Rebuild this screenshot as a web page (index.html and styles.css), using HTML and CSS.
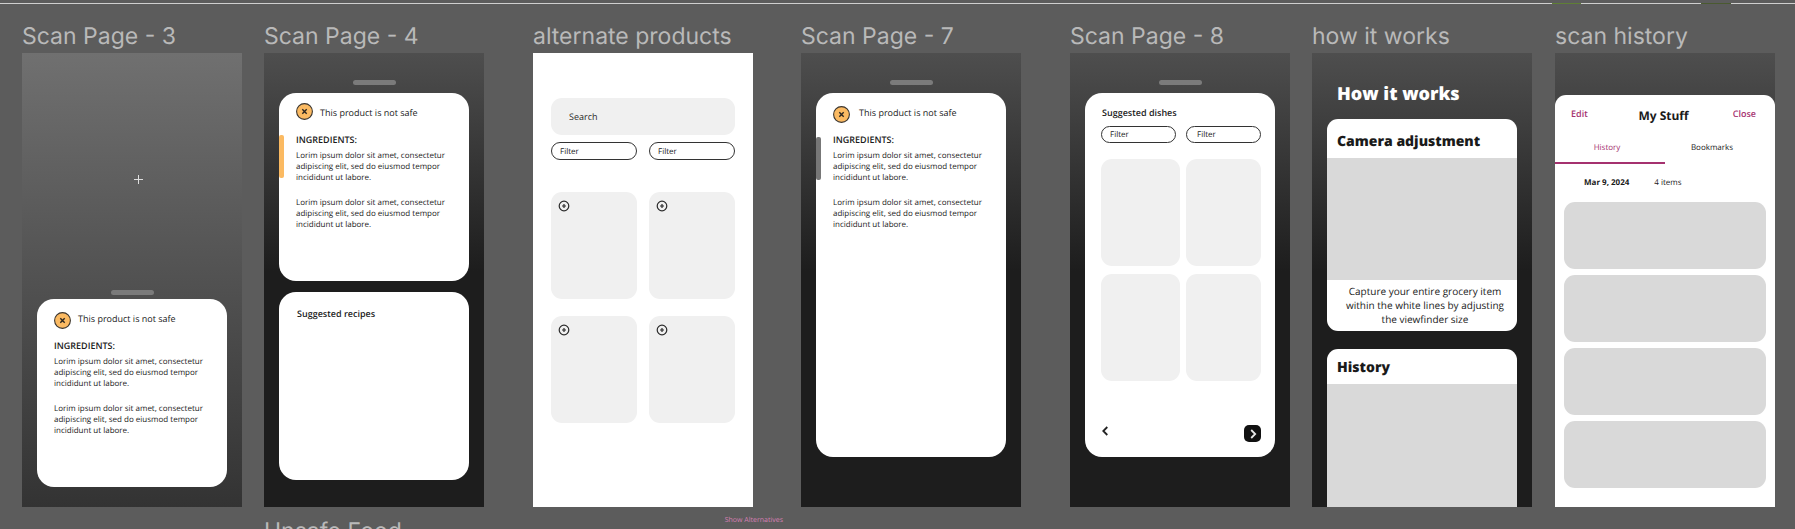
FILE: index.html
```html
<!DOCTYPE html>
<html lang="en">
<head>
<meta charset="utf-8">
<title>Scan app screens</title>
<link rel="stylesheet" href="styles.css">
</head>
<body>
<svg class="symbols" aria-hidden="true">
  <symbol id="unsafe" viewBox="0 0 17 17">
    <circle cx="8.5" cy="8.5" r="7.9" fill="#fbba62" stroke="#3b3630" stroke-width="1.1"/>
    <path d="M6.3 6.3l4.4 4.4M10.7 6.3l-4.4 4.4" stroke="#2b2620" stroke-width="1.4" fill="none"/>
  </symbol>
  <symbol id="add" viewBox="0 0 12 12">
    <circle cx="6" cy="6" r="4.8" fill="none" stroke="#2a2a2a" stroke-width="1.2"/>
    <path d="M6 4v4M4 6h4" stroke="#2a2a2a" stroke-width="1.2" fill="none"/>
  </symbol>
</svg>

<div class="rule"><span class="mark mark-a"></span><span class="mark mark-b"></span></div>

<main class="board">
  <section class="artboard col-1">
    <h2 class="label">Scan Page - 3</h2>
    <div class="frame frame-light">
      <div class="viewfinder">
        <svg class="cross" viewBox="0 0 9 9" aria-hidden="true"><path d="M4.5 0v9M0 4.5h9" stroke="#dedede" stroke-width="1"/></svg>
      </div>
      <div class="grip"></div>
      <article class="card card-half">
        <div class="status icon-low"><svg class="badge" aria-hidden="true"><use href="#unsafe"/></svg><span>This product is not safe</span></div>
        <h3 class="heading">INGREDIENTS:</h3>
        <p class="copy">Lorim ipsum dolor sit amet, consectetur adipiscing elit, sed do eiusmod tempor incididunt ut labore.</p>
        <p class="copy">Lorim ipsum dolor sit amet, consectetur adipiscing elit, sed do eiusmod tempor incididunt ut labore.</p>
      </article>
    </div>
  </section>

  <section class="artboard col-2">
    <h2 class="label">Scan Page - 4</h2>
    <div class="frame frame-dark sheet">
      <div class="grip"></div>
      <article class="card card-half">
        <span class="side-tab tab-amber"></span>
        <div class="status icon-high"><svg class="badge" aria-hidden="true"><use href="#unsafe"/></svg><span>This product is not safe</span></div>
        <h3 class="heading">INGREDIENTS:</h3>
        <p class="copy">Lorim ipsum dolor sit amet, consectetur adipiscing elit, sed do eiusmod tempor incididunt ut labore.</p>
        <p class="copy">Lorim ipsum dolor sit amet, consectetur adipiscing elit, sed do eiusmod tempor incididunt ut labore.</p>
      </article>
      <article class="card card-half recipes">
        <h3 class="heading">Suggested recipes</h3>
      </article>
    </div>
  </section>

  <section class="artboard col-3">
    <h2 class="label">alternate products</h2>
    <div class="frame frame-white">
      <input class="search" type="search" placeholder="Search" aria-label="Search">
      <div class="pair filters-wide">
        <button class="filter" type="button">Filter</button>
        <button class="filter" type="button">Filter</button>
      </div>
      <div class="pair products">
        <div class="tile"><button class="add" type="button" aria-label="Add product"><svg><use href="#add"/></svg></button></div>
        <div class="tile"><button class="add" type="button" aria-label="Add product"><svg><use href="#add"/></svg></button></div>
        <div class="tile"><button class="add" type="button" aria-label="Add product"><svg><use href="#add"/></svg></button></div>
        <div class="tile"><button class="add" type="button" aria-label="Add product"><svg><use href="#add"/></svg></button></div>
      </div>
    </div>
  </section>

  <section class="artboard col-4">
    <h2 class="label">Scan Page - 7</h2>
    <div class="frame frame-dark sheet">
      <div class="grip"></div>
      <article class="card card-tall">
        <span class="side-tab tab-grey"></span>
        <div class="status icon-low wide"><svg class="badge" aria-hidden="true"><use href="#unsafe"/></svg><span>This product is not safe</span></div>
        <h3 class="heading">INGREDIENTS:</h3>
        <p class="copy">Lorim ipsum dolor sit amet, consectetur adipiscing elit, sed do eiusmod tempor incididunt ut labore.</p>
        <p class="copy">Lorim ipsum dolor sit amet, consectetur adipiscing elit, sed do eiusmod tempor incididunt ut labore.</p>
      </article>
    </div>
  </section>

  <section class="artboard col-5">
    <h2 class="label">Scan Page - 8</h2>
    <div class="frame frame-dark sheet">
      <div class="grip"></div>
      <article class="card card-tall dishes">
        <h3 class="heading">Suggested dishes</h3>
        <div class="dish-grid dish-filters">
          <button class="filter" type="button">Filter</button>
          <button class="filter" type="button">Filter</button>
        </div>
        <div class="dish-grid">
          <div class="tile"></div><div class="tile"></div>
          <div class="tile"></div><div class="tile"></div>
        </div>
        <nav class="pager">
          <button class="back" type="button" aria-label="Back"><svg viewBox="0 0 8 12"><path d="M6.3 2L2.3 6l4 4" fill="none" stroke="#222" stroke-width="1.8"/></svg></button>
          <button class="next" type="button" aria-label="Next"><svg viewBox="0 0 8 12"><path d="M2.2 2l4 4-4 4" fill="none" stroke="#e8e8e8" stroke-width="1.8"/></svg></button>
        </nav>
      </article>
    </div>
  </section>

  <section class="artboard col-6">
    <h2 class="label">how it works</h2>
    <div class="frame frame-dark guide">
      <h1 class="guide-title">How it works</h1>
      <article class="step">
        <h3 class="step-title">Camera adjustment</h3>
        <div class="picture"></div>
        <p class="caption">Capture your entire grocery item within the white lines by adjusting the viewfinder size</p>
      </article>
      <article class="step">
        <h3 class="step-title">History</h3>
        <div class="picture"></div>
      </article>
    </div>
  </section>

  <section class="artboard col-7">
    <h2 class="label">scan history</h2>
    <div class="frame frame-dark history">
      <div class="panel">
        <header class="bar">
          <button class="action" type="button">Edit</button>
          <h3 class="panel-title">My Stuff</h3>
          <button class="action" type="button">Close</button>
        </header>
        <nav class="tabs">
          <button class="tab current" type="button">History</button>
          <button class="tab" type="button">Bookmarks</button>
        </nav>
        <div class="day"><strong>Mar 9, 2024</strong><span>4 items</span></div>
        <ul class="items"><li></li><li></li><li></li><li></li></ul>
      </div>
    </div>
  </section>

  <h2 class="label next-label">Unsafe Food</h2>
  <a class="alternatives" href="#">Show Alternatives</a>
</main>
</body>
</html>
```
FILE: styles.css
```css
* { box-sizing: border-box; }

body {
  margin: 0;
  height: 100vh;
  overflow: hidden;
  background: #5c5c5c;
  color: #1a1a1a;
  font: 400 8px/11px "Open Sans", sans-serif;
  text-rendering: geometricPrecision;
}

h1, h2, h3, p, ul { margin: 0; padding: 0; }

button {
  margin: 0;
  padding: 0;
  border: 0;
  background: none;
  color: inherit;
  font: inherit;
  text-rendering: inherit;
}

svg { display: block; }
.symbols { position: absolute; width: 0; height: 0; }

/* canvas */
.rule {
  display: grid;
  grid-template-columns: 1552fr 29fr 120fr 30fr 64fr;
  height: 1px;
  margin-top: 3px;
  background: #cfcfcf;
}
.mark-a { grid-column: 2; background: #5f7f35; }
.mark-b { grid-column: 4; background: #4a5a30; }

.board {
  display: grid;
  grid-template-columns:
    22fr minmax(0, 220fr) 22fr minmax(0, 220fr) 49fr minmax(0, 220fr) 48fr
    minmax(0, 220fr) 49fr minmax(0, 220fr) 22fr minmax(0, 220fr) 23fr
    minmax(0, 220fr) 20fr;
  padding-top: 15px;
}
.col-1 { grid-column: 2; }
.col-2 { grid-column: 4; }
.col-3 { grid-column: 6; }
.col-4 { grid-column: 8; }
.col-5 { grid-column: 10; }
.col-6 { grid-column: 12; }
.col-7 { grid-column: 14; }

.label {
  color: #b9b9b9;
  font: 400 23px/34px Inter, sans-serif;
  white-space: nowrap;
}
.next-label { grid-area: 2 / 4; padding-top: 7px; }
.alternatives {
  grid-area: 2 / 6 / 3 / 8;
  justify-self: end;
  padding: 8px 18px 0 0;
  color: #d77fb4;
  font-size: 7px;
  text-decoration: none;
}

/* frames */
.frame {
  display: flex;
  flex-direction: column;
  height: 454px;
  overflow: hidden;
}
.frame-light { background: linear-gradient(#707070, #333); }
.frame-dark { background: linear-gradient(#4e4e4e, #1d1d1d 48%); }
.frame-white { background: #fff; padding: 45px 18px 0; }
.sheet { padding-top: 27px; }

.viewfinder {
  display: grid;
  place-items: center;
  height: 237px;
  padding: 15px 0 0 12px;
}
.cross { width: 9px; height: 9px; }

.grip {
  flex: none;
  align-self: center;
  width: 43px;
  height: 5px;
  border-radius: 3px;
  background: #7b7b7b;
}
.sheet .grip { margin-bottom: 8px; }
.frame-light .grip { margin-bottom: 4px; }

.card {
  position: relative;
  flex: none;
  margin: 0 15px;
  padding: 10px 16px 0 17px;
  border-radius: 17px;
  background: #fff;
}
.card-half { height: 188px; }
.card-tall { height: 364px; }
.recipes { margin-top: 11px; padding: 16px 18px 0; }

.side-tab {
  position: absolute;
  left: 0;
  width: 5px;
  height: 43px;
  border-radius: 2px;
}
.tab-amber { top: 42px; background: #fbba62; }
.tab-grey { top: 44px; background: #777; }

.status {
  display: flex;
  gap: 7px;
  height: 20px;
  font-size: 9px;
  line-height: 20px;
}
.status.wide { gap: 9px; }
.icon-low { align-items: flex-end; }
.icon-high { align-items: flex-start; }
.badge { width: 17px; height: 17px; }

.heading { font-size: 9px; font-weight: 600; line-height: 12px; }
.status + .heading { margin-top: 11px; }
.copy { margin-top: 4px; }
.copy + .copy { margin-top: 14px; }

/* search and filters */
.search {
  width: 100%;
  height: 37px;
  padding: 0 18px;
  border: 0;
  border-radius: 11px;
  background: #f0f0f0;
  font: 400 9px/12px "Open Sans", sans-serif;
  text-rendering: inherit;
}
.search::placeholder { color: #2a2a2a; opacity: 1; }

.filter {
  height: 18px;
  padding: 0 8px;
  border: 1px solid #333;
  border-radius: 9px;
  text-align: left;
}

.pair {
  display: grid;
  grid-template-columns: 1fr 1fr;
  gap: 17px 12px;
}
.filters-wide { margin-top: 7px; }
.products { margin-top: 32px; }

.tile { height: 107px; border-radius: 11px; background: #f0f0f0; }
.add { display: block; margin: 8px 7px; }
.add svg { width: 12px; height: 12px; }

/* dishes */
.dishes { padding: 14px 14px 0 16px; }
.dishes .heading { padding-left: 1px; }
.dish-grid {
  display: grid;
  grid-template-columns: 79fr 75fr;
  gap: 8px 6px;
}
.dish-filters { margin: 7px 0 16px; }
.dish-filters .filter:first-child { margin-right: 4px; }
.dish-filters .filter { height: 17px; }
.dish-filters .filter:last-child { padding-left: 10px; }
.pager {
  display: flex;
  justify-content: space-between;
  align-items: flex-start;
  margin-top: 44px;
}
.pager svg { width: 8px; height: 12px; }
.next {
  display: grid;
  place-items: center;
  width: 17px;
  height: 17px;
  border-radius: 5px;
  background: #111;
}

/* guide */
.guide { padding: 29px 15px 0; }
.guide-title {
  padding-left: 10px;
  color: #fff;
  font-size: 18px;
  font-weight: 800;
  line-height: 24px;
}
.step {
  flex: none;
  margin-top: 13px;
  border-radius: 11px;
  background: #fff;
  overflow: hidden;
}
.step + .step { margin-top: 18px; }
.step-title {
  padding: 13px 10px 6px;
  font-size: 14px;
  font-weight: 800;
  line-height: 20px;
}
.step + .step .step-title { padding: 9px 10px 6px; }
.picture { height: 122px; background: #d9d9d9; }
.step + .step .picture { height: 144px; }
.caption {
  padding: 4px 10px 5px 16px;
  font-size: 10px;
  line-height: 14px;
  text-align: center;
}

/* history */
.history { padding-top: 42px; }
.panel { flex: 1; border-radius: 11px 11px 0 0; background: #fff; }
.bar {
  display: grid;
  grid-template-columns: 1fr auto 1fr;
  align-items: start;
  padding: 12px 19px 0 16px;
}
.action { justify-self: start; color: #a5316f; font-size: 9px; font-weight: 600; line-height: 14px; }
.action:last-child { justify-self: end; }
.panel-title { font-size: 12px; font-weight: 700; line-height: 18px; }
.tabs { display: grid; grid-template-columns: 1fr 1fr; margin-top: 13px; }
.tab { height: 26px; padding: 0 6px 6px 0; border-bottom: 2px solid transparent; }
.tab:last-child { padding-right: 16px; }
.current { border-color: #a5316f; color: #a5316f; }
.day { display: flex; gap: 25px; padding: 13px 29px 14px; }
.items { display: grid; gap: 6px; padding: 0 9px; list-style: none; }
.items li { height: 67px; border-radius: 11px; background: #d9d9d9; }
```
